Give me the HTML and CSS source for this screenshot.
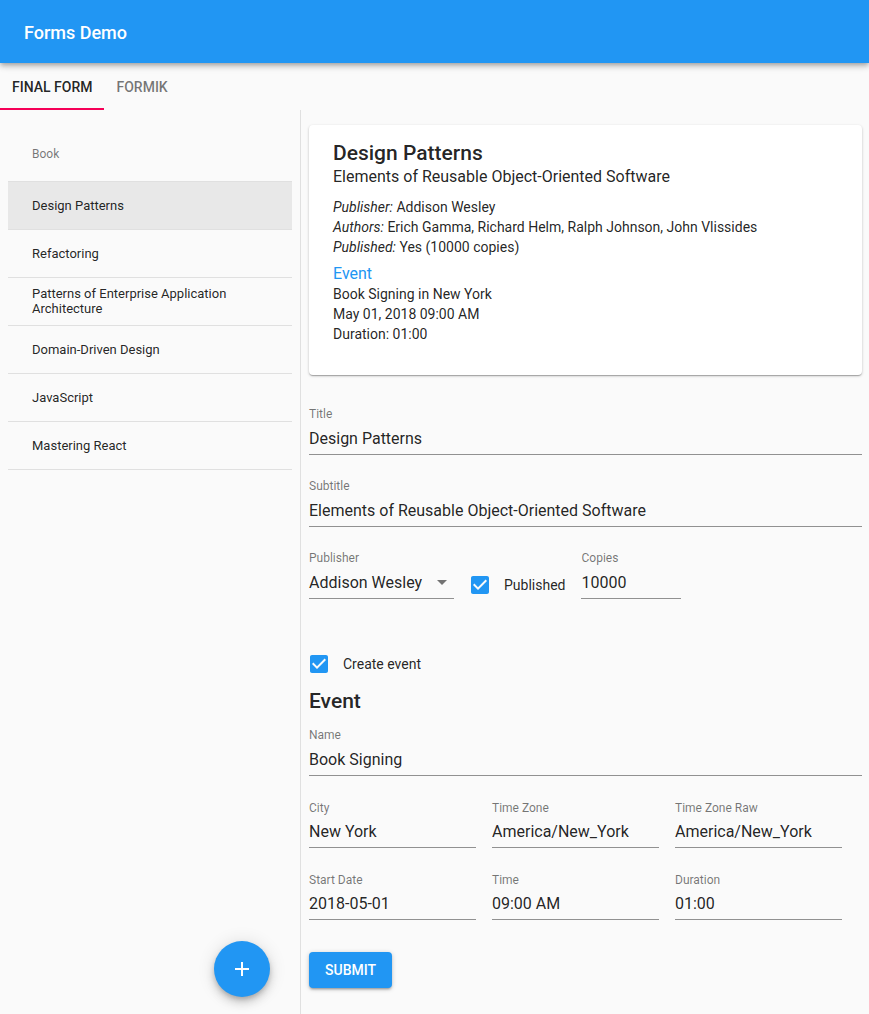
FILE: index.html
```html
<!DOCTYPE html>
<html lang="en">
<head>
<meta charset="utf-8">
<title>Forms Demo</title>
<link rel="stylesheet" href="styles.css">
</head>
<body>
<header class="appbar"><h1 class="appbar-title">Forms Demo</h1></header>
<nav class="tabs">
  <div class="tab tab-active">Final Form</div>
  <div class="tab">Formik</div>
</nav>
<div class="main">
  <aside class="sidebar">
    <div class="subheader">Book</div>
    <ul class="book-list">
      <li class="book-item book-item-selected">Design Patterns</li>
      <li class="book-item">Refactoring</li>
      <li class="book-item book-item-two">Patterns of Enterprise Application Architecture</li>
      <li class="book-item">Domain-Driven Design</li>
      <li class="book-item">JavaScript</li>
      <li class="book-item">Mastering React</li>
    </ul>
    <button class="fab" type="button" aria-label="Add">
      <svg viewBox="0 0 24 24" width="24" height="24"><path d="M19 13h-6v6h-2v-6H5v-2h6V5h2v6h6v2z" fill="#fff"/></svg>
    </button>
  </aside>
  <section class="content">
    <div class="card">
      <div class="card-title">Design Patterns</div>
      <div class="card-subtitle">Elements of Reusable Object-Oriented Software</div>
      <div class="card-details">
        <div><em>Publisher:</em> Addison Wesley</div>
        <div><em>Authors:</em> Erich Gamma, Richard Helm, Ralph Johnson, John Vlissides</div>
        <div><em>Published:</em> Yes (10000 copies)</div>
      </div>
      <div class="card-event">Event</div>
      <div class="card-details">
        <div>Book Signing in New York</div>
        <div>May 01, 2018 09:00 AM</div>
        <div>Duration: 01:00</div>
      </div>
    </div>

    <form class="form">
      <div class="field">
        <label class="field-label">Title</label>
        <div class="field-input">Design Patterns</div>
      </div>
      <div class="field">
        <label class="field-label">Subtitle</label>
        <div class="field-input">Elements of Reusable Object-Oriented Software</div>
      </div>
      <div class="row">
        <div class="field field-publisher">
          <label class="field-label">Publisher</label>
          <div class="field-input select">
            <span>Addison Wesley</span>
            <svg class="select-arrow" viewBox="0 0 24 24" width="24" height="24"><path d="M7 10l5 5 5-5z" fill="rgba(0,0,0,0.54)"/></svg>
          </div>
        </div>
        <div class="check check-published">
          <span class="check-box">
            <svg viewBox="0 0 24 24" width="24" height="24"><path fill="#2196f3" d="M19 3H5c-1.11 0-2 .9-2 2v14c0 1.1.89 2 2 2h14c1.11 0 2-.9 2-2V5c0-1.1-.89-2-2-2zm-9 14l-5-5 1.41-1.41L10 14.17l7.590-7.59L19 8l-9 9z"/></svg>
          </span>
          <span class="check-label">Published</span>
        </div>
        <div class="field field-copies">
          <label class="field-label">Copies</label>
          <div class="field-input">10000</div>
        </div>
      </div>

      <div class="check check-event">
        <span class="check-box">
          <svg viewBox="0 0 24 24" width="24" height="24"><path fill="#2196f3" d="M19 3H5c-1.11 0-2 .9-2 2v14c0 1.1.89 2 2 2h14c1.11 0 2-.9 2-2V5c0-1.1-.89-2-2-2zm-9 14l-5-5 1.41-1.41L10 14.17l7.59-7.59L19 8l-9 9z"/></svg>
        </span>
        <span class="check-label">Create event</span>
      </div>
      <h2 class="section-title">Event</h2>
      <div class="field">
        <label class="field-label">Name</label>
        <div class="field-input">Book Signing</div>
      </div>
      <div class="grid3">
        <div class="field">
          <label class="field-label">City</label>
          <div class="field-input">New York</div>
        </div>
        <div class="field">
          <label class="field-label">Time Zone</label>
          <div class="field-input">America/New_York</div>
        </div>
        <div class="field">
          <label class="field-label">Time Zone Raw</label>
          <div class="field-input">America/New_York</div>
        </div>
        <div class="field">
          <label class="field-label">Start Date</label>
          <div class="field-input">2018-05-01</div>
        </div>
        <div class="field">
          <label class="field-label">Time</label>
          <div class="field-input">09:00 AM</div>
        </div>
        <div class="field">
          <label class="field-label">Duration</label>
          <div class="field-input">01:00</div>
        </div>
      </div>
      <button class="submit" type="button">Submit</button>
    </form>
  </section>
</div>
</body>
</html>
```

FILE: styles.css
```css
* { box-sizing: border-box; }
html, body { margin: 0; padding: 0; }
body {
  background: #fafafa;
  font-family: Roboto, "Liberation Sans", sans-serif;
  color: rgba(0, 0, 0, 0.87);
  min-height: 100vh;
  display: flex;
  flex-direction: column;
}

.appbar {
  height: 63px;
  flex: 0 0 auto;
  background: #2196f3;
  display: flex;
  align-items: center;
  padding: 0 24px 0 24px;
  position: relative;
  z-index: 2;
  box-shadow: 0 2px 4px -1px rgba(0,0,0,0.2), 0 4px 5px 0 rgba(0,0,0,0.14), 0 1px 10px 0 rgba(0,0,0,0.12);
}
.appbar-title {
  margin: 2px 0 0;
  color: #fff;
  font-size: 18px;
  font-weight: 500;
  line-height: 24px;
}

.tabs {
  display: flex;
  height: 47px;
  flex: 0 0 auto;
}
.tab {
  height: 47px;
  padding: 1px 12px 0;
  display: flex;
  align-items: center;
  font-size: 14px;
  font-weight: 500;
  text-transform: uppercase;
  color: rgba(0, 0, 0, 0.54);
}
.tab-active {
  color: rgba(0, 0, 0, 0.87);
  box-shadow: inset 0 -2px 0 #f50057;
}

.main {
  flex: 1 1 auto;
  display: flex;
}

.sidebar {
  width: 301px;
  flex: 0 0 301px;
  border-right: 1px solid #e0e0e0;
  display: flex;
  flex-direction: column;
  padding: 20px 8px 0 8px;
}
.subheader {
  height: 51px;
  line-height: 48px;
  padding-left: 24px;
  font-size: 12px;
  color: rgba(0, 0, 0, 0.54);
}
.book-list {
  list-style: none;
  margin: 0;
  padding: 0;
  border-top: 1px solid #e0e0e0;
}
.book-item {
  height: 48px;
  border-bottom: 1px solid #e0e0e0;
  display: flex;
  align-items: center;
  padding: 0 24px;
  font-size: 13px;
  line-height: 15px;
  color: rgba(0, 0, 0, 0.87);
}
.book-item-two { padding-right: 60px; padding-bottom: 2px; }
.book-item-selected { background: #e8e8e8; }

.fab {
  margin-top: auto;
  align-self: flex-end;
  margin-right: 22px;
  margin-bottom: 17px;
  width: 56px;
  height: 56px;
  border-radius: 50%;
  border: none;
  background: #2196f3;
  display: flex;
  align-items: center;
  justify-content: center;
  padding: 0;
  box-shadow: 0 3px 5px -1px rgba(0,0,0,0.2), 0 6px 10px 0 rgba(0,0,0,0.14), 0 1px 18px 0 rgba(0,0,0,0.12);
}

.content {
  flex: 1 1 auto;
  padding: 15px 7px 0 8px;
  min-width: 0;
}

.card {
  background: #fff;
  border-radius: 4px;
  padding: 16px 24px 31px;
  margin-bottom: 16px;
  box-shadow: 0 1px 3px 0 rgba(0,0,0,0.2), 0 1px 1px 0 rgba(0,0,0,0.14), 0 2px 1px -1px rgba(0,0,0,0.12);
}
.card-title {
  font-size: 21px;
  font-weight: 500;
  line-height: 24px;
}
.card-subtitle {
  font-size: 16px;
  line-height: 24px;
}
.card-details {
  font-size: 14px;
  line-height: 20px;
}
.card-subtitle + .card-details { margin-top: 8px; }
.card-event {
  color: #2196f3;
  font-size: 16px;
  line-height: 22px;
  margin-top: 5px;
  padding-top: 1px;
  height: 22px;
}

.form {
  display: flex;
  flex-direction: column;
}
.field {
  display: flex;
  flex-direction: column;
  margin: 16px 0 8px;
}
.field-label {
  font-size: 12px;
  line-height: 14px;
  height: 12px;
  color: rgba(0, 0, 0, 0.54);
}
.field-input {
  margin-top: 4px;
  padding: 6px 0;
  font-size: 16px;
  line-height: 19px;
  height: 32px;
  border-bottom: 1px solid rgba(0, 0, 0, 0.42);
  white-space: nowrap;
  overflow: hidden;
}

.row {
  display: flex;
  align-items: flex-end;
}
.field-publisher { width: 145px; }
.select {
  display: flex;
  align-items: center;
  justify-content: space-between;
  overflow: visible;
}
.select-arrow {
  margin: -3px 0 -2px;
  flex: 0 0 24px;
}
.field-copies { width: 100px; }

.check {
  display: flex;
  align-items: center;
  height: 48px;
}
.check-box {
  width: 48px;
  height: 48px;
  padding: 12px;
  display: flex;
}
.check-label {
  font-size: 14px;
  color: rgba(0, 0, 0, 0.87);
}
.check-published {
  margin-left: 2px;
  margin-right: 16px;
  margin-bottom: -2px;
}
.check-event {
  margin-top: 33px;
  margin-left: -14px;
}

.section-title {
  margin: 0;
  font-size: 21px;
  font-weight: 500;
  line-height: 24px;
  padding-top: 1px;
  height: 24px;
}

.grid3 {
  display: grid;
  grid-template-columns: repeat(3, 167px);
  column-gap: 16px;
}
.grid3 .field-label { line-height: 16px; }

.submit {
  align-self: flex-start;
  margin-top: 24px;
  height: 36px;
  min-width: 64px;
  padding: 0 16px;
  border: none;
  border-radius: 4px;
  background: #2196f3;
  color: #fff;
  font-family: Roboto, "Liberation Sans", sans-serif;
  font-size: 14px;
  font-weight: 500;
  text-transform: uppercase;
  box-shadow: 0 1px 5px 0 rgba(0,0,0,0.2), 0 2px 2px 0 rgba(0,0,0,0.14), 0 3px 1px -2px rgba(0,0,0,0.12);
}
```
